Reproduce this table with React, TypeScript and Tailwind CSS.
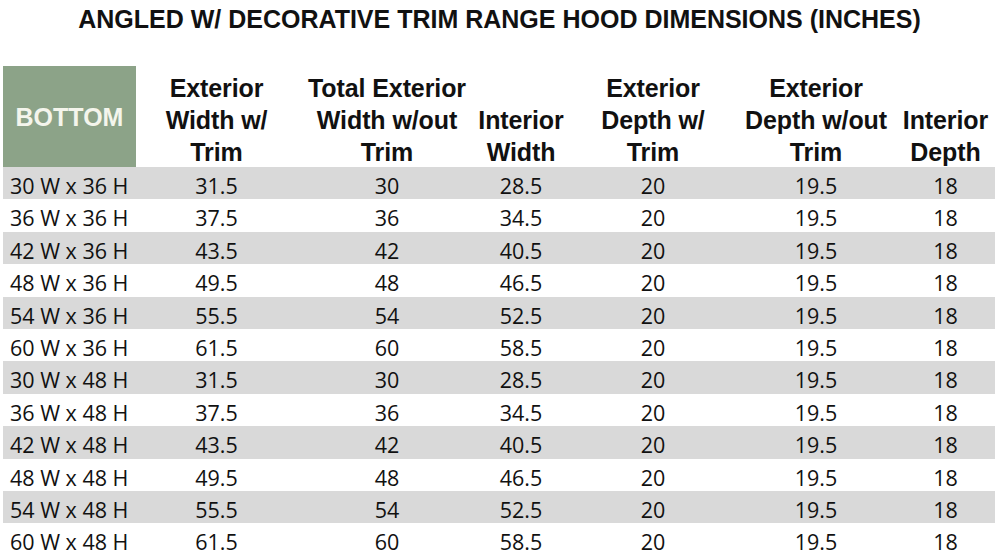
const heads: string[][] = [
  ['Exterior', 'Width w/', 'Trim'],
  ['Total Exterior', 'Width w/out', 'Trim'],
  ['Interior', 'Width'],
  ['Exterior', 'Depth w/', 'Trim'],
  ['Exterior', 'Depth w/out', 'Trim'],
  ['Interior', 'Depth'],
]

const rows: string[][] = [
  ['30 W x 36 H', '31.5', '30', '28.5', '20', '19.5', '18'],
  ['36 W x 36 H', '37.5', '36', '34.5', '20', '19.5', '18'],
  ['42 W x 36 H', '43.5', '42', '40.5', '20', '19.5', '18'],
  ['48 W x 36 H', '49.5', '48', '46.5', '20', '19.5', '18'],
  ['54 W x 36 H', '55.5', '54', '52.5', '20', '19.5', '18'],
  ['60 W x 36 H', '61.5', '60', '58.5', '20', '19.5', '18'],
  ['30 W x 48 H', '31.5', '30', '28.5', '20', '19.5', '18'],
  ['36 W x 48 H', '37.5', '36', '34.5', '20', '19.5', '18'],
  ['42 W x 48 H', '43.5', '42', '40.5', '20', '19.5', '18'],
  ['48 W x 48 H', '49.5', '48', '46.5', '20', '19.5', '18'],
  ['54 W x 48 H', '55.5', '54', '52.5', '20', '19.5', '18'],
  ['60 W x 48 H', '61.5', '60', '58.5', '20', '19.5', '18'],
]

const cols = 'grid grid-cols-[133px_161px_180px_88px_176px_150px_103px]'

export default function App() {
  return (
    <div className="w-[999px] h-[556px] overflow-hidden bg-white text-[#111]">
      {/* Title */}
      <h1 className="pt-[4px] h-[66px] text-center text-[25px] font-bold leading-[30px] font-['Liberation_Sans',Arial,sans-serif]">
        ANGLED W/ DECORATIVE TRIM RANGE HOOD DIMENSIONS (INCHES)
      </h1>

      <div className="ml-[3px] w-[992px]">
        {/* Header */}
        <div className={`${cols} h-[101px] font-['Liberation_Sans',Arial,sans-serif] font-bold text-[25px] leading-[32px]`}>
          <div className="bg-[#8ca388] text-[#f4f5ec] flex items-center justify-center pt-[1px]">BOTTOM</div>
          {heads.map((h, i) => (
            <div
              key={i}
              className={`flex flex-col justify-end items-center pb-0 translate-y-[1px] whitespace-nowrap tracking-[-0.1px] ${i === 5 ? 'pl-[6px]' : ''}`}
            >
              {h.map((l) => (
                <span key={l}>{l}</span>
              ))}
            </div>
          ))}
        </div>

        {/* Body */}
        <div className="font-['Open_Sans','Lato',sans-serif] text-[21.5px]">
          {rows.map((r, i) => (
            <div key={i} className={`${cols} h-[32.4px] items-center pt-[3px] ${i % 2 === 0 ? 'bg-[#d9d9d9]' : 'bg-white'}`}>
              {r.map((c, j) => (
                <span key={j} className={j === 0 ? 'pl-[7px]' : j === 6 ? 'text-center pl-[6px]' : 'text-center'}>
                  {c}
                </span>
              ))}
            </div>
          ))}
        </div>
      </div>
    </div>
  )
}
